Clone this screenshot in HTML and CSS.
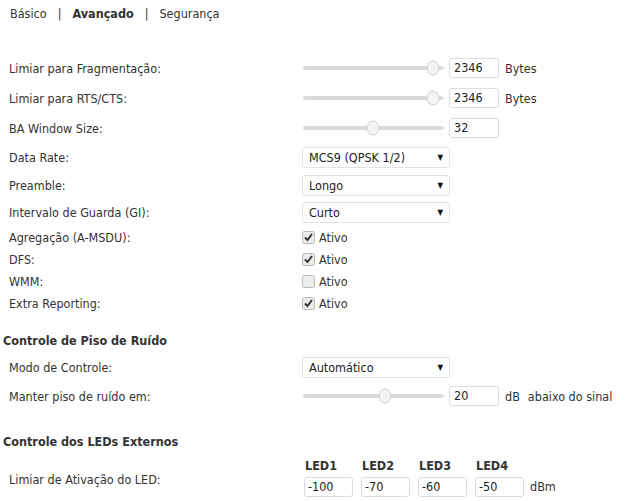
FILE: index.html
```html
<!DOCTYPE html>
<html>
<head>
<meta charset="utf-8">
<link rel="stylesheet" href="styles.css">
</head>
<body>
<div class="page">
  <div class="tabs"><span>Básico</span><span class="sep">|</span><span class="active">Avançado</span><span class="sep">|</span><span>Segurança</span></div>

  <div class="rows">
    <div class="row h30"><div class="label">Limiar para Fragmentação:</div>
      <div class="ctrl">
        <svg class="slider" width="148" height="20" viewBox="0 0 148 20"><path d="M3 8h136l4 2-4 2H3a2 2 0 0 1 0-4z" fill="#dadada"/><ellipse cx="131" cy="10" rx="6" ry="7" fill="#f4f4f4" stroke="#cfcfcf"/></svg>
        <div class="input">2346</div><span class="unit">Bytes</span>
      </div>
    </div>
    <div class="row h30"><div class="label">Limiar para RTS/CTS:</div>
      <div class="ctrl">
        <svg class="slider" width="148" height="20" viewBox="0 0 148 20"><path d="M3 8h136l4 2-4 2H3a2 2 0 0 1 0-4z" fill="#dadada"/><ellipse cx="131" cy="10" rx="6" ry="7" fill="#f4f4f4" stroke="#cfcfcf"/></svg>
        <div class="input">2346</div><span class="unit">Bytes</span>
      </div>
    </div>
    <div class="row h30"><div class="label">BA Window Size:</div>
      <div class="ctrl">
        <svg class="slider" width="148" height="20" viewBox="0 0 148 20"><path d="M3 8h136l4 2-4 2H3a2 2 0 0 1 0-4z" fill="#dadada"/><ellipse cx="71" cy="10" rx="6" ry="7" fill="#f4f4f4" stroke="#cfcfcf"/></svg>
        <div class="input">32</div>
      </div>
    </div>
    <div class="row h28"><div class="label">Data Rate:</div>
      <div class="ctrl"><div class="select"><span>MCS9 (QPSK 1/2)</span><span class="arrow">▼</span></div></div>
    </div>
    <div class="row h28"><div class="label">Preamble:</div>
      <div class="ctrl"><div class="select"><span>Longo</span><span class="arrow">▼</span></div></div>
    </div>
    <div class="row h27"><div class="label">Intervalo de Guarda (GI):</div>
      <div class="ctrl"><div class="select"><span>Curto</span><span class="arrow">▼</span></div></div>
    </div>
    <div class="row h22"><div class="label">Agregação (A-MSDU):</div>
      <div class="ctrl"><svg class="cb" width="13" height="13" viewBox="0 0 13 13"><rect x="0.5" y="0.5" width="12" height="12" rx="2" fill="#ececec" stroke="#b9b9b9"/><path d="M3 6.5l2.5 2.5 4.5-6" fill="none" stroke="#333" stroke-width="2"/></svg><span class="cblabel">Ativo</span></div>
    </div>
    <div class="row h22"><div class="label">DFS:</div>
      <div class="ctrl"><svg class="cb" width="13" height="13" viewBox="0 0 13 13"><rect x="0.5" y="0.5" width="12" height="12" rx="2" fill="#ececec" stroke="#b9b9b9"/><path d="M3 6.5l2.5 2.5 4.5-6" fill="none" stroke="#333" stroke-width="2"/></svg><span class="cblabel">Ativo</span></div>
    </div>
    <div class="row h22"><div class="label">WMM:</div>
      <div class="ctrl"><svg class="cb" width="13" height="13" viewBox="0 0 13 13"><rect x="0.5" y="0.5" width="12" height="12" rx="2" fill="#ececec" stroke="#b9b9b9"/></svg><span class="cblabel">Ativo</span></div>
    </div>
    <div class="row h22"><div class="label">Extra Reporting:</div>
      <div class="ctrl"><svg class="cb" width="13" height="13" viewBox="0 0 13 13"><rect x="0.5" y="0.5" width="12" height="12" rx="2" fill="#ececec" stroke="#b9b9b9"/><path d="M3 6.5l2.5 2.5 4.5-6" fill="none" stroke="#333" stroke-width="2"/></svg><span class="cblabel">Ativo</span></div>
    </div>
  </div>

  <h3 class="section first">Controle de Piso de Ruído</h3>
  <div class="rows">
    <div class="row h28"><div class="label">Modo de Controle:</div>
      <div class="ctrl"><div class="select"><span>Automático</span><span class="arrow">▼</span></div></div>
    </div>
    <div class="row h30"><div class="label">Manter piso de ruído em:</div>
      <div class="ctrl">
        <svg class="slider" width="148" height="20" viewBox="0 0 148 20"><path d="M3 8h136l4 2-4 2H3a2 2 0 0 1 0-4z" fill="#dadada"/><ellipse cx="83" cy="10" rx="6" ry="7" fill="#f4f4f4" stroke="#cfcfcf"/></svg>
        <div class="input">20</div><span class="unit">dB</span><span class="unit2">abaixo do sinal</span>
      </div>
    </div>
  </div>

  <h3 class="section second">Controle dos LEDs Externos</h3>
  <div class="ledrow">
    <div class="label">Limiar de Ativação do LED:</div>
    <div class="leds">
      <div class="led"><div class="ledname">LED1</div><div class="input">-100</div></div>
      <div class="led"><div class="ledname">LED2</div><div class="input">-70</div></div>
      <div class="led"><div class="ledname">LED3</div><div class="input">-60</div></div>
      <div class="led"><div class="ledname">LED4</div><div class="input">-50</div></div>
      <span class="dbm">dBm</span>
    </div>
  </div>
</div>
</body>
</html>
```
FILE: styles.css
```css
* { box-sizing: border-box; }
body {
  margin: 0;
  background: #fff;
  font-family: "DejaVu Sans Condensed", "DejaVu Sans", sans-serif;
  font-size: 12.5px;
  color: #333;
}
.page { padding: 0; }
.tabs {
  padding: 7px 0 0 10px;
  height: 53px;
  line-height: 14px;
  display: flex;
  gap: 0;
}
.tabs .sep { margin: 0 11px; }
.tabs .active { font-weight: bold; }
.rows { display: flex; flex-direction: column; }
.row {
  display: flex;
  align-items: center;
}
.h30 { height: 30px; }
.h28 { height: 28px; }
.h27 { height: 27px; }
.h22 { height: 22px; }
.label {
  width: 302px;
  padding-left: 9px;
  flex: none;
}
.ctrl {
  display: flex;
  align-items: center;
}
.slider { display: block; margin-right: -1px; }
.input {
  width: 50px;
  height: 20px;
  border: 1px solid #dcdcdc;
  border-radius: 3px;
  padding: 0 4px;
  line-height: 18px;
  color: #222;
}
.unit { margin-left: 6px; }
.unit2 { margin-left: 8px; }
.select {
  width: 148px;
  height: 21px;
  border: 1px solid #e2e2e2;
  border-radius: 3px;
  display: flex;
  align-items: center;
  justify-content: space-between;
  padding: 0 6px 0 6px;
  color: #222;
}
.arrow { font-size: 8px; color: #111; }
.cb { display: block; margin-right: 4px; }
.cblabel { color: #333; }
.section {
  margin: 0;
  font-size: 12.5px;
  font-weight: bold;
  line-height: 14px;
  padding-left: 3px;
  color: #333;
}
.section.first { padding-top: 20px; margin-bottom: 5px; }
.section.second { padding-top: 24px; }
.ledrow {
  display: flex;
  align-items: center;
  margin-top: 10px;
}
.leds { display: flex; align-items: flex-end; gap: 8px; }
.led { width: 49px; display: flex; flex-direction: column; gap: 4px; }
.ledname { font-weight: bold; line-height: 14px; padding-left: 1px; }
.led .input { width: 49px; padding: 0 3px; }
.dbm { line-height: 20px; margin-left: -2px; }
.ledrow .label { padding-top: 2px; }
.ledrow .leds { margin-left: 2px; }
```
